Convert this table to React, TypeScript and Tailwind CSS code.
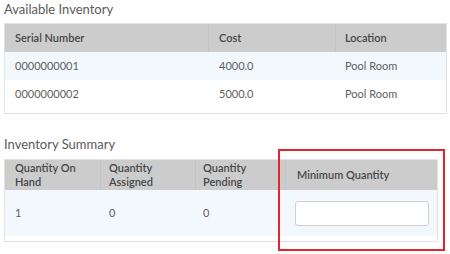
import React from 'react';

interface InventoryItem {
  serial: string;
  cost: string;
  location: string;
}

const items: InventoryItem[] = [
  { serial: '0000000001', cost: '4000.0', location: 'Pool Room' },
  { serial: '0000000002', cost: '5000.0', location: 'Pool Room' },
];

const font = { fontFamily: 'Lato, "Open Sans", sans-serif' };

export default function App() {
  return (
    <div className="w-[450px] h-[254px] bg-white overflow-hidden text-[#606060]" style={font}>
      {/* Available Inventory */}
      <div className="pl-[4px] pt-[1px] h-[23px] text-[13px] leading-[16px] text-[#5a5a5a]">Available Inventory</div>
      <div className="ml-[4px] w-[443px] border border-[#e3e3e3] pb-[5px]">
        <div className="grid grid-cols-[204px_127px_1fr] h-[28px] bg-[#cccccc] text-[11px] font-semibold text-[#474747]">
          <div className="flex items-center pl-[10px] border-r border-[#c4c4c4]">Serial Number</div>
          <div className="flex items-center pl-[10px] border-r border-[#c4c4c4]">Cost</div>
          <div className="flex items-center pl-[9px]">Location</div>
        </div>
        {items.map((item, i) => (
          <div
            key={item.serial}
            className={`grid grid-cols-[204px_127px_1fr] h-[28px] text-[11px] ${i === 0 ? 'bg-[#f3f8fc]' : 'bg-white'}`}
          >
            <div className="flex items-center pl-[10px]">{item.serial}</div>
            <div className="flex items-center pl-[10px]">{item.cost}</div>
            <div className="flex items-center pl-[9px]">{item.location}</div>
          </div>
        ))}
      </div>

      {/* Inventory Summary */}
      <div className="pl-[4px] pt-[22px] h-[45px] text-[13px] leading-[16px] text-[#5a5a5a]">Inventory Summary</div>
      <div className="relative ml-[4px] w-[434px] border border-[#e3e3e3] pb-[5px]">
        <div className="grid grid-cols-[96px_95px_90px_1fr] h-[30px] bg-[#cccccc] text-[11px] font-semibold text-[#474747] leading-[14px]">
          <div className="flex items-center pl-[10px] border-r border-[#c4c4c4]">Quantity On<br />Hand</div>
          <div className="flex items-center pl-[8px] border-r border-[#c4c4c4]">Quantity<br />Assigned</div>
          <div className="flex items-center pl-[7px] border-r border-[#c4c4c4]">Quantity<br />Pending</div>
          <div className="flex items-center pl-[11px]">Minimum Quantity</div>
        </div>
        <div className="grid grid-cols-[96px_95px_90px_1fr] h-[46px] bg-[#f3f8fc] text-[11px]">
          <div className="flex items-center pl-[10px]">1</div>
          <div className="flex items-center pl-[8px]">0</div>
          <div className="flex items-center pl-[7px]">0</div>
          <div className="flex items-center pl-[9px]">
            <input
              type="text"
              className="w-[134px] h-[25px] bg-white border border-[#cfcfcf] rounded-[3px] outline-none"
            />
          </div>
        </div>
        {/* highlight around the minimum quantity column */}
        <div className="absolute left-[273px] top-[-11px] w-[167px] h-[102px] border-2 border-[#e3262b] pointer-events-none" />
      </div>
    </div>
  );
}
